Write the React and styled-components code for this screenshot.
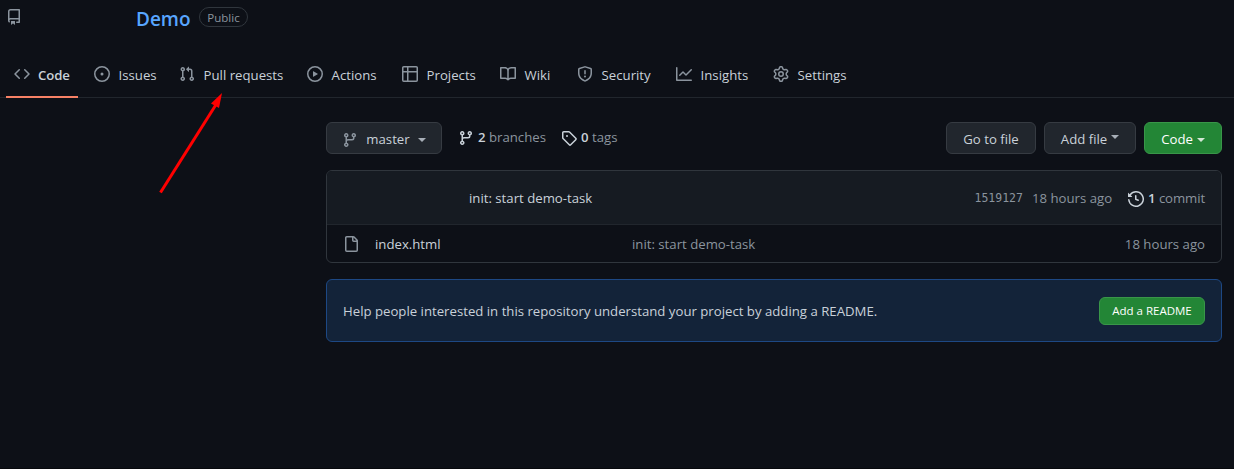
import React from "react";
import styled, { createGlobalStyle } from "styled-components";

const GlobalStyle = createGlobalStyle`
  * { box-sizing: border-box; }
  body {
    margin: 0;
    background: #0d1017;
    color: #c9d1d9;
    font-family: "Open Sans", "Noto Sans", sans-serif;
    font-size: 13.2px;
    line-height: 20px;
    overflow: hidden;
  }
`;

const paths = {
  repo: "M2 2.5A2.5 2.5 0 014.5 0h8.75a.75.75 0 01.75.75v12.5a.75.75 0 01-.75.75h-2.5a.75.75 0 110-1.5h1.75v-2h-8a1 1 0 00-.714 1.7.75.75 0 01-1.072 1.05A2.495 2.495 0 012 11.5v-9zm10.5-1V9h-8c-.356 0-.694.074-1 .208V2.5a1 1 0 011-1h8zM5 12.25v3.25a.25.25 0 00.4.2l1.45-1.087a.25.25 0 01.3 0L8.6 15.7a.25.25 0 00.4-.2v-3.25a.25.25 0 00-.25-.25h-3.5a.25.25 0 00-.25.25z",
  code: "M4.72 3.22a.75.75 0 011.06 1.06L2.06 8l3.72 3.72a.75.75 0 11-1.06 1.06L.47 8.53a.75.75 0 010-1.06l4.25-4.25zm6.56 0a.75.75 0 10-1.06 1.06L13.94 8l-3.72 3.72a.75.75 0 101.06 1.06l4.25-4.25a.75.75 0 000-1.06l-4.25-4.25z",
  issue: "M8 9.5a1.5 1.5 0 100-3 1.5 1.5 0 000 3zM8 0a8 8 0 100 16A8 8 0 008 0zM1.5 8a6.5 6.5 0 1113 0 6.5 6.5 0 01-13 0z",
  pull: "M7.177 3.073L9.573.677A.25.25 0 0110 .854v4.792a.25.25 0 01-.427.177L7.177 3.427a.25.25 0 010-.354zM3.75 2.5a.75.75 0 100 1.5.75.75 0 000-1.5zm-2.25.75a2.25 2.25 0 113 2.122v5.256a2.251 2.251 0 11-1.5 0V5.372A2.25 2.25 0 011.5 3.25zM11 2.5h-1V4h1a1 1 0 011 1v5.628a2.251 2.251 0 101.5 0V5A2.5 2.5 0 0011 2.5zm1 10.25a.75.75 0 111.5 0 .75.75 0 01-1.5 0zM3.75 12a.75.75 0 100 1.5.75.75 0 000-1.5z",
  play: "M1.5 8a6.5 6.5 0 1113 0 6.5 6.5 0 01-13 0zM8 0a8 8 0 100 16A8 8 0 008 0zM6.379 5.227A.25.25 0 006 5.442v5.117a.25.25 0 00.379.214l4.264-2.559a.25.25 0 000-.428L6.379 5.227z",
  table: "M0 1.75C0 .784.784 0 1.75 0h12.5C15.216 0 16 .784 16 1.75v12.5A1.75 1.75 0 0114.25 16H1.75A1.75 1.75 0 010 14.25V1.75zM1.5 6.5v7.75c0 .138.112.25.25.25H5v-8H1.5zM5 5H1.5V1.75a.25.25 0 01.25-.25H5V5zm1.5 1.5v8h7.75a.25.25 0 00.25-.25V6.5h-8zm8-1.5h-8V1.5h7.75a.25.25 0 01.25.25V5z",
  book: "M0 1.75A.75.75 0 01.75 1h4.253c1.227 0 2.317.59 3 1.501A3.744 3.744 0 0111.006 1h4.245a.75.75 0 01.75.75v10.5a.75.75 0 01-.75.75h-4.507a2.25 2.25 0 00-1.591.659l-.622.621a.75.75 0 01-1.06 0l-.622-.621A2.25 2.25 0 005.258 13H.75a.75.75 0 01-.75-.75V1.75zm8.755 3a2.25 2.25 0 012.25-2.25H14.5v9h-3.757c-.71 0-1.4.201-1.992.572l.004-7.322zm-1.504 7.324l.004-5.073-.002-2.253A2.25 2.25 0 005.003 2.5H1.5v9h3.757a3.75 3.75 0 011.994.574z",
  shield: "M7.467.133a1.75 1.75 0 011.066 0l5.25 1.68A1.75 1.75 0 0115 3.48V7c0 1.566-.32 3.182-1.303 4.682-.983 1.498-2.585 2.813-5.032 3.855a1.7 1.7 0 01-1.33 0c-2.447-1.042-4.049-2.357-5.032-3.855C1.32 10.182 1 8.566 1 7V3.48a1.75 1.75 0 011.217-1.667l5.25-1.68zm.61 1.429a.25.25 0 00-.153 0l-5.25 1.68a.25.25 0 00-.174.238V7c0 1.358.275 2.666 1.057 3.86.784 1.194 2.121 2.34 4.366 3.297a.2.2 0 00.154 0c2.245-.956 3.582-2.104 4.366-3.298C13.225 9.666 13.5 8.36 13.5 7V3.48a.25.25 0 00-.174-.237l-5.25-1.68zM9 10.5a1 1 0 11-2 0 1 1 0 012 0zm-.25-5.75a.75.75 0 10-1.5 0v3a.75.75 0 001.5 0v-3z",
  graph: "M1.5 1.75a.75.75 0 00-1.5 0v12.5c0 .414.336.75.75.75h14.5a.75.75 0 000-1.5H1.5V1.75zm14.28 2.53a.75.75 0 00-1.06-1.06L10 7.94 7.53 5.47a.75.75 0 00-1.06 0L3.22 8.72a.75.75 0 001.06 1.06L7 7.06l2.47 2.47a.75.75 0 001.06 0l5.25-5.25z",
  gear: "M7.429 1.525a6.593 6.593 0 011.142 0c.036.003.108.036.137.146l.289 1.105c.147.56.55.967.997 1.189.174.086.341.183.501.29.417.278.97.423 1.53.27l1.102-.303c.11-.03.175.016.195.046.219.31.41.641.573.989.014.031.022.11-.059.19l-.815.806c-.411.406-.562.957-.53 1.456a4.588 4.588 0 010 .582c-.032.499.119 1.05.53 1.456l.815.806c.08.08.073.159.059.19a6.494 6.494 0 01-.573.99c-.02.029-.086.074-.195.045l-1.103-.303c-.559-.153-1.112-.008-1.529.27-.16.107-.327.204-.5.29-.449.222-.851.628-.998 1.189l-.289 1.105c-.029.11-.101.143-.137.146a6.613 6.613 0 01-1.142 0c-.036-.003-.108-.037-.137-.146l-.289-1.105c-.147-.56-.55-.967-.997-1.189a4.502 4.502 0 01-.501-.29c-.417-.278-.97-.423-1.53-.27l-1.102.303c-.11.03-.175-.016-.195-.046a6.492 6.492 0 01-.573-.989c-.014-.031-.022-.11.059-.19l.815-.806c.411-.406.562-.957.53-1.456a4.587 4.587 0 010-.582c.032-.499-.119-1.05-.53-1.456l-.815-.806c-.08-.08-.073-.159-.059-.19a6.44 6.44 0 01.573-.99c.02-.029.086-.075.195-.045l1.103.303c.559.153 1.112.008 1.529-.27.16-.107.327-.204.5-.29.449-.222.851-.628.998-1.189l.289-1.105c.029-.11.101-.143.137-.146zM8 0c-.236 0-.47.01-.701.03-.743.065-1.29.615-1.458 1.261l-.29 1.106c-.017.066-.078.158-.211.224a5.994 5.994 0 00-.668.386c-.123.082-.233.09-.3.071L3.27 2.776c-.644-.177-1.392.02-1.82.63a7.977 7.977 0 00-.704 1.217c-.315.675-.111 1.422.363 1.891l.815.806c.05.048.098.147.088.294a6.084 6.084 0 000 .772c.01.147-.038.246-.088.294l-.815.806c-.474.469-.678 1.216-.363 1.891.2.428.436.835.704 1.218.428.609 1.176.806 1.82.63l1.103-.303c.066-.019.176-.011.299.071.213.143.436.272.668.386.133.066.194.158.212.224l.289 1.106c.169.646.715 1.196 1.458 1.26a8.094 8.094 0 001.402 0c.743-.064 1.29-.614 1.458-1.26l.29-1.106c.017-.066.078-.158.211-.224a5.98 5.98 0 00.668-.386c.123-.082.233-.09.3-.071l1.102.302c.644.177 1.392-.02 1.82-.63.268-.382.505-.789.704-1.217.315-.675.111-1.422-.364-1.891l-.814-.806c-.05-.048-.098-.147-.088-.294a6.1 6.1 0 000-.772c-.01-.147.039-.246.088-.294l.814-.806c.475-.469.679-1.216.364-1.891a7.992 7.992 0 00-.704-1.218c-.428-.609-1.176-.806-1.82-.63l-1.103.303c-.066.019-.176.011-.299-.071a5.991 5.991 0 00-.668-.386c-.133-.066-.194-.158-.212-.224L10.16 1.29C9.99.645 9.444.095 8.701.031A8.094 8.094 0 008 0zm1.5 8a1.5 1.5 0 11-3 0 1.5 1.5 0 013 0zM11 8a3 3 0 11-6 0 3 3 0 016 0z",
  branch: "M11.75 2.5a.75.75 0 100 1.5.75.75 0 000-1.5zm-2.25.75a2.25 2.25 0 113 2.122V6A2.5 2.5 0 0110 8.5H6a1 1 0 00-1 1v1.128a2.251 2.251 0 11-1.5 0V5.372a2.25 2.25 0 111.5 0v1.836A2.492 2.492 0 016 7h4a1 1 0 001-1v-.628A2.25 2.25 0 019.5 3.25zM4.25 12a.75.75 0 100 1.5.75.75 0 000-1.5zM3.5 3.25a.75.75 0 111.5 0 .75.75 0 01-1.5 0z",
  tag: "M2.5 7.775V2.75a.25.25 0 01.25-.25h5.025a.25.25 0 01.177.073l6.25 6.25a.25.25 0 010 .354l-5.025 5.025a.25.25 0 01-.354 0l-6.25-6.25a.25.25 0 01-.073-.177zm-1.5 0V2.75C1 1.784 1.784 1 2.75 1h5.025c.464 0 .91.184 1.238.513l6.25 6.25a1.75 1.75 0 010 2.474l-5.026 5.026a1.75 1.75 0 01-2.474 0l-6.25-6.25A1.75 1.75 0 011 7.775zM6 5a1 1 0 100 2 1 1 0 000-2z",
  history: "M1.643 3.143L.427 1.927A.25.25 0 000 2.104V5.75c0 .138.112.25.25.25h3.646a.25.25 0 00.177-.427L2.715 4.215a6.5 6.5 0 11-1.18 4.458.75.75 0 10-1.493.154 8.001 8.001 0 101.6-5.684zM7.75 4a.75.75 0 01.75.75v2.992l2.028.812a.75.75 0 01-.557 1.392l-2.5-1A.75.75 0 017 8.25v-3.5A.75.75 0 017.75 4z",
  file: "M3.75 1.5a.25.25 0 00-.25.25v12.5c0 .138.112.25.25.25h9.5a.25.25 0 00.25-.25V6h-2.75A1.75 1.75 0 019 4.25V1.5H3.75zm6.75.062V4.25c0 .138.112.25.25.25h2.688a.252.252 0 00-.011-.013l-2.914-2.914a.272.272 0 00-.013-.011zM2 1.75C2 .784 2.784 0 3.75 0h6.586c.464 0 .909.184 1.237.513l2.914 2.914c.329.328.513.773.513 1.237v9.586A1.75 1.75 0 0113.25 16h-9.5A1.75 1.75 0 012 14.25V1.75z",
};

const Svg = styled.svg`
  display: block;
  flex: none;
  margin-top: ${(p) => p.$drop || 0}px;
  fill: ${(p) => (p.$bright ? "#c9d1d9" : "#8b949e")};
`;

const Icon = ({ name, bright, drop }) => (
  <Svg width="16" height="16" viewBox="0 0 16 16" $bright={bright} $drop={drop}>
    <path fillRule="evenodd" d={paths[name]} />
  </Svg>
);

const Page = styled.div`
  position: relative;
  height: 469px;
  background: #0d1017;
  border-bottom: 1px solid #07090d;
`;

const RepoHeader = styled.header`
  display: flex;
  height: 49px;
  padding: 7px 0 0 6px;
`;

const RepoIcon = styled.div`
  width: 130px;
  padding-top: 2px;
`;

const RepoName = styled.a`
  height: 24px;
  width: 55px;
  font-size: 19px;
  font-weight: 600;
  line-height: 24px;
  color: #58a6ff;
  white-space: nowrap;
`;

const Visibility = styled.span`
  height: 20px;
  width: 49px;
  margin-left: 8px;
  border: 1px solid #30363d;
  border-radius: 10px;
  color: #8b949e;
  font-size: 11.5px;
  line-height: 19px;
  text-align: center;
`;

const TabBar = styled.nav`
  display: flex;
  gap: 8px;
  height: 49px;
  padding-left: 6px;
  border-bottom: 1px solid #21262d;
`;

const Tab = styled.a`
  display: flex;
  gap: ${(p) => (p.$active ? 8 : 8.6)}px;
  width: ${(p) => p.$width}px;
  height: 49px;
  padding: 16px 0 0 8px;
  border-bottom: 2px solid ${(p) => (p.$active ? "#f78166" : "transparent")};
  font-weight: ${(p) => (p.$active ? 600 : 400)};
  letter-spacing: ${(p) => (p.$active ? "-0.1px" : "0")};
  white-space: nowrap;
`;

const TabLabel = styled.span`
  height: 20px;
`;

const Main = styled.main`
  width: 896px;
  margin: 24px 0 0 326px;
`;

const Toolbar = styled.div`
  display: flex;
  height: 32px;
`;

const Button = styled.button`
  display: flex;
  align-items: center;
  justify-content: center;
  width: ${(p) => p.$width}px;
  height: ${(p) => (p.$small ? 28 : 32)}px;
  padding: 1px 0 0;
  border: 1px solid ${(p) => (p.$primary ? "#399649" : "#363b42")};
  border-radius: 6px;
  background: ${(p) => (p.$primary ? "#238636" : "#21262d")};
  color: ${(p) => (p.$primary ? "#ffffff" : "#c9d1d9")};
  font-family: inherit;
  font-size: ${(p) => (p.$small ? 11.5 : 13.2)}px;
  font-weight: 400;
  line-height: 20px;
  white-space: nowrap;
`;

const BranchLabel = styled.span`
  margin: 0 4px 0 8px;
`;

const Caret = styled.span`
  width: 8px;
  height: 4px;
  margin: ${(p) => (p.$raised ? "-3px 0 0 4px" : "2px 0 0 4px")};
  border: 4px solid transparent;
  border-top-color: currentColor;
  border-bottom: 0;
  opacity: 0.8;
`;

const RefCount = styled.a`
  display: flex;
  align-items: center;
  gap: 4px;
  width: ${(p) => p.$width}px;
  height: 30px;
  color: #8b949e;
  white-space: nowrap;
`;

const Strong = styled.strong`
  font-weight: 600;
  color: #c9d1d9;
`;

const RefList = styled.div`
  display: flex;
  margin-left: 16px;
  flex: 1;
`;

const Actions = styled.div`
  display: flex;
  gap: 8px;
`;

const FileBox = styled.section`
  height: 93px;
  margin-top: 16px;
  border: 1px solid #30363d;
  border-radius: 6px;
  overflow: hidden;
`;

const CommitRow = styled.div`
  display: flex;
  align-items: center;
  height: 54px;
  padding: 1px 16px 0 142px;
  background: #161b22;
  border-bottom: 1px solid #21262d;
`;

const FileRow = styled.div`
  display: grid;
  grid-template-columns: 32px 257px 1fr auto;
  align-items: center;
  height: 36px;
  padding: 1px 16px 0;
`;

const Message = styled.span`
  flex: 1;
`;

const Muted = styled.span`
  color: #8b949e;
`;

const Hash = styled.code`
  margin-right: 9px;
  color: #8b949e;
  font-family: "DejaVu Sans Mono", monospace;
  font-size: 11.5px;
`;

const Commits = styled.a`
  display: flex;
  align-items: center;
  gap: 4px;
  margin-left: 16px;
  color: #8b949e;
  letter-spacing: -0.1px;
`;

const Banner = styled.section`
  display: flex;
  align-items: center;
  justify-content: space-between;
  height: 63px;
  margin-top: 16px;
  padding: 0 16px;
  border: 1px solid #1d4884;
  border-radius: 6px;
  background: #132339;
`;

const Pointer = styled.svg`
  position: absolute;
  left: 155px;
  top: 90px;
`;

const tabs = [
  ["Code", "code", 72],
  ["Issues", "issue", 77],
  ["Pull requests", "pull", 120],
  ["Actions", "play", 87],
  ["Projects", "table", 90],
  ["Wiki", "book", 69],
  ["Security", "shield", 91],
  ["Insights", "graph", 89],
  ["Settings", "gear", 90],
];

export default function App() {
  return (
    <Page>
      <GlobalStyle />
      <RepoHeader>
        <RepoIcon><Icon name="repo" /></RepoIcon>
        <RepoName>Demo</RepoName>
        <Visibility>Public</Visibility>
      </RepoHeader>
      <TabBar>
        {tabs.map(([label, icon, width], i) => (
          <Tab key={label} $width={width} $active={i === 0}>
            <Icon name={icon} drop={1} />
            <TabLabel>{label}</TabLabel>
          </Tab>
        ))}
      </TabBar>
      <Main>
        <Toolbar>
          <Button $width={116}>
            <Icon name="branch" drop={2} />
            <BranchLabel>master</BranchLabel>
            <Caret />
          </Button>
          <RefList>
            <RefCount $width={103}>
              <Icon name="branch" bright drop={2} />
              <span><Strong>2</Strong> branches</span>
            </RefCount>
            <RefCount $width={60}>
              <Icon name="tag" bright drop={2} />
              <span><Strong>0</Strong> tags</span>
            </RefCount>
          </RefList>
          <Actions>
            <Button $width={90}>Go to file</Button>
            <Button $width={92}>Add file<Caret $raised /></Button>
            <Button $width={78} $primary>Code<Caret /></Button>
          </Actions>
        </Toolbar>
        <FileBox>
          <CommitRow>
            <Message>init: start demo-task</Message>
            <Hash>1519127</Hash>
            <Muted>18 hours ago</Muted>
            <Commits>
              <Icon name="history" bright drop={1} />
              <span><Strong>1</Strong> commit</span>
            </Commits>
          </CommitRow>
          <FileRow>
            <Icon name="file" drop={1} />
            <span>index.html</span>
            <Muted>init: start demo-task</Muted>
            <Muted>18 hours ago</Muted>
          </FileRow>
        </FileBox>
        <Banner>
          <span>Help people interested in this repository understand your project by adding a README.</span>
          <Button $width={106} $small $primary>Add a README</Button>
        </Banner>
      </Main>
      <Pointer width="70" height="106" viewBox="0 0 70 106">
        <path d="M5.5 102.5L62 13" stroke="#ff0000" strokeWidth="3" fill="none" />
        <path d="M67 3L56 13.5L64 18Z" fill="#ff0000" />
      </Pointer>
    </Page>
  );
}
